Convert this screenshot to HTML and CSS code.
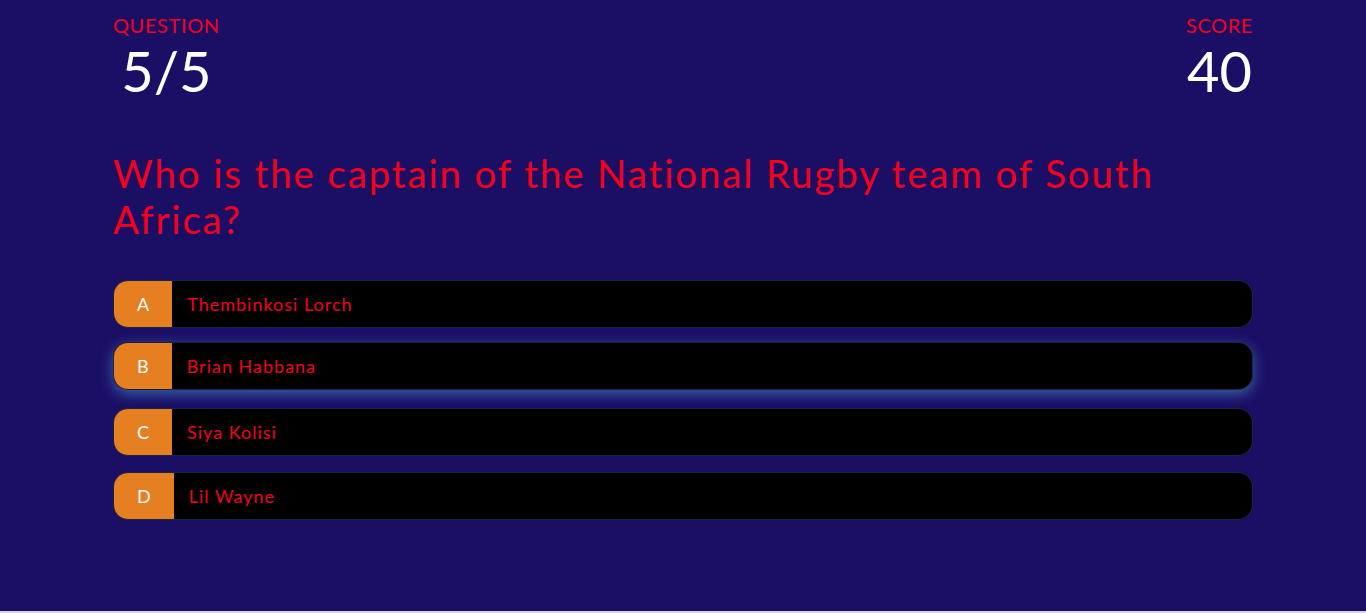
FILE: index.html
```html
<!DOCTYPE html>
<html lang="en">

<head>
  <meta charset="UTF-8">
  <meta name="viewport" content="width=device-width, initial-scale=1.0">
  <title>Quick Quiz</title>
  <link rel="stylesheet" href="styles.css">
</head>

<body>
  <div class="container">
    <div id="game" class="justify-center flex-column">
      <div id="hud">
        <div class="hud-item">
          <p class="hud-prefix">Question</p>
          <h1 class="hud-main-text" id="questionCounter">5/5</h1>
        </div>
        <div class="hud-item">
          <p class="hud-prefix">Score</p>
          <h1 class="hud-main-text" id="score">40</h1>
        </div>
      </div>

      <h2 id="question">Who is the captain of the National Rugby team of South Africa?</h2>

      <div class="choice-container">
        <p class="choice-prefix">A</p>
        <p class="choice-text" data-number="1">Thembinkosi Lorch</p>
      </div>
      <div class="choice-container hovered">
        <p class="choice-prefix">B</p>
        <p class="choice-text" data-number="2">Brian Habbana</p>
      </div>
      <div class="choice-container">
        <p class="choice-prefix">C</p>
        <p class="choice-text" data-number="3">Siya Kolisi</p>
      </div>
      <div class="choice-container">
        <p class="choice-prefix">D</p>
        <p class="choice-text" data-number="4">Lil Wayne</p>
      </div>
    </div>
  </div>
</body>

</html>
```
FILE: styles.css
```css
html {
  background-color: #d6d6d6;
}

body {
  margin: 0;
  font-family: Lato, "Open Sans", sans-serif;
  background-color: #1b0f65;
  color: #f5001a;
  min-height: 611px;
}

p,
h1,
h2 {
  margin: 0;
  font-weight: 400;
}

.container {
  width: 1140px;
  margin: 0 auto;
  padding-top: 13px;
}

.flex-column {
  display: flex;
  flex-direction: column;
}

/* HUD */
#hud {
  display: flex;
  justify-content: space-between;
}

.hud-item {
  text-align: center;
}

.hud-prefix {
  font-size: 20px;
  line-height: 1.2;
  letter-spacing: 0.6px;
  text-transform: uppercase;
}

.hud-main-text {
  font-size: 56px;
  line-height: 1.2;
  color: white;
}

/* question */
#question {
  font-size: 38.4px;
  line-height: 1.2;
  letter-spacing: 1.9px;
  margin: 46px 0 38px;
}

/* choices */
.choice-container {
  display: flex;
  height: 48px;
  box-sizing: border-box;
  margin-bottom: 16px;
  font-size: 18px;
  line-height: 46px;
  border: 1px solid rgba(86, 165, 235, 0.25);
  border-radius: 15px;
  background-color: black;
  overflow: hidden;
}

.choice-container:hover,
.choice-container.hovered {
  cursor: pointer;
  box-shadow: 0 4px 14px 0 rgba(86, 185, 235, 0.5);
  transform: translateY(-2px);
}

.choice-prefix {
  padding: 0 23px;
  background-color: #e67e22;
  color: white;
}

.choice-text {
  padding: 0 15px;
  letter-spacing: 1px;
  flex: 1;
}
```
